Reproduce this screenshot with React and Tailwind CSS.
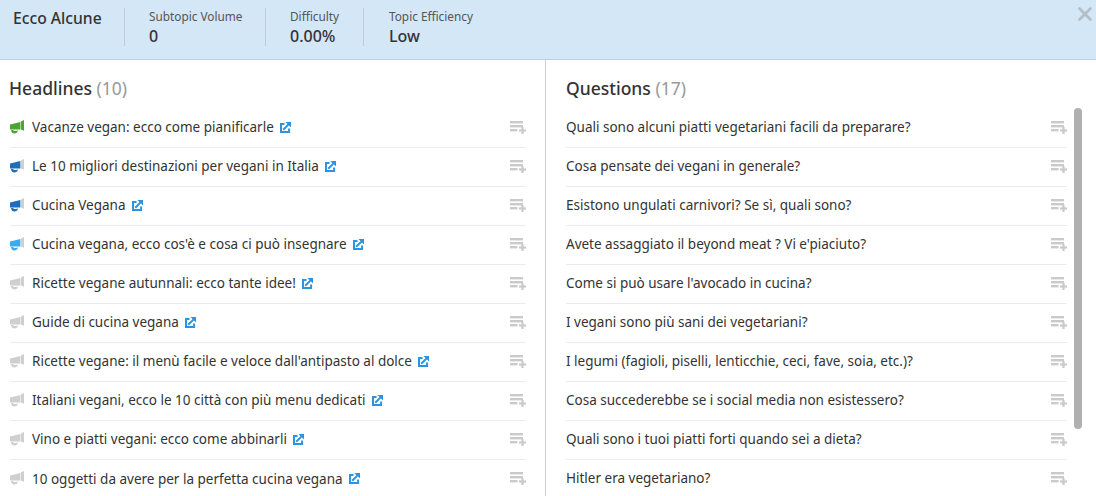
import { X } from 'lucide-react';

const headlines = [
  { text: 'Vacanze vegan: ecco come pianificarle', level: 4 },
  { text: 'Le 10 migliori destinazioni per vegani in Italia', level: 3 },
  { text: 'Cucina Vegana', level: 3 },
  { text: "Cucina vegana, ecco cos'è e cosa ci può insegnare", level: 2 },
  { text: 'Ricette vegane autunnali: ecco tante idee!', level: 1 },
  { text: 'Guide di cucina vegana', level: 1 },
  { text: "Ricette vegane: il menù facile e veloce dall'antipasto al dolce", level: 1 },
  { text: 'Italiani vegani, ecco le 10 città con più menu dedicati', level: 1 },
  { text: 'Vino e piatti vegani: ecco come abbinarli', level: 1 },
  { text: '10 oggetti da avere per la perfetta cucina vegana', level: 1 },
];

const questions = [
  'Quali sono alcuni piatti vegetariani facili da preparare?',
  'Cosa pensate dei vegani in generale?',
  'Esistono ungulati carnivori? Se sì, quali sono?',
  "Avete assaggiato il beyond meat ? Vi e'piaciuto?",
  "Come si può usare l'avocado in cucina?",
  'I vegani sono più sani dei vegetariani?',
  'I legumi (fagioli, piselli, lenticchie, ceci, fave, soia, etc.)?',
  'Cosa succederebbe se i social media non esistessero?',
  'Quali sono i tuoi piatti forti quando sei a dieta?',
  'Hitler era vegetariano?',
];

const bodyColors = { 1: '#cfcfcf', 2: '#3fa9ee', 3: '#1c6fb8', 4: '#4aa532' };
const hornColors = { 1: '#cfcfcf', 2: '#cfcfcf', 3: '#cfcfcf', 4: '#4aa532' };

function Megaphone({ level }) {
  return (
    <svg width="14" height="14" viewBox="0 0 14 14" className="shrink-0 mb-[2px]">
      <path d="M0 4.5L10.4 2V9.4H0Z" fill={bodyColors[level]} />
      <path d="M10.9 1.6L14 0V10.8L10.9 9.4Z" fill={hornColors[level]} />
      <path d="M1 10H3.2C3.5 11.2 5.2 11.6 7.6 10.2V12C5 14.4 1.4 14 1 10Z" fill={bodyColors[level]} />
    </svg>
  );
}

function ExternalIcon() {
  return (
    <svg width="11" height="11" viewBox="0 0 11 11" className="ml-[6px] shrink-0 mb-[1px]" fill="none" stroke="#2b94e1">
      <path d="M4.5 1.9H1V10H9.1V6.5" strokeWidth="2" />
      <path d="M3.2 7.8L8.6 2.4" strokeWidth="2" />
      <path d="M5.4 0H11V5.6Z" fill="#2b94e1" stroke="none" />
    </svg>
  );
}

function AddIcon() {
  return (
    <svg width="16" height="13" viewBox="0 0 16 13" className="block mb-[1px]" fill="#cacaca">
      <rect x="0" y="0" width="13" height="2.4" />
      <rect x="0" y="4" width="13" height="2.4" />
      <rect x="0" y="8" width="7.5" height="2.4" />
      <rect x="9" y="8.4" width="7" height="2.2" />
      <rect x="11.4" y="6" width="2.2" height="7" />
    </svg>
  );
}

function Stat({ label, value }) {
  return (
    <div className="flex flex-col">
      <span className="text-[11.8px] leading-[16px] text-[#555]">{label}</span>
      <span className="text-[16px] leading-[20px] mt-[2px] font-medium text-[#333]">{value}</span>
    </div>
  );
}

function Row({ children }) {
  return (
    <div className="h-[39px] pb-[1px] flex items-center border-b border-[#e9edf2] last:border-b-0 text-[13.5px] text-[#333]">
      {children}
    </div>
  );
}

export default function App() {
  return (
    <div className="w-[1096px] h-[496px] overflow-hidden bg-white flex flex-col font-['Noto_Sans','Open_Sans',sans-serif]">
      {/* Header */}
      <div className="relative h-[60px] shrink-0 bg-[#d3e7f7] border-b border-[#bfcfdd] flex pt-[8px]">
        <div className="w-[125px] pl-[13px] text-[15.7px] leading-[20px] font-medium text-[#333] border-r border-[#bfcdd9] h-[38px]">
          Ecco Alcune
        </div>
        <div className="w-[141px] pl-[24px] border-r border-[#bfcdd9] h-[38px]">
          <Stat label="Subtopic Volume" value="0" />
        </div>
        <div className="w-[98px] pl-[24px] border-r border-[#bfcdd9] h-[38px]">
          <Stat label="Difficulty" value="0.00%" />
        </div>
        <div className="pl-[25px]">
          <Stat label="Topic Efficiency" value="Low" />
        </div>
        <X size={22} strokeWidth={3} className="absolute right-0 top-[3px] text-[#b5bec5]" />
      </div>

      {/* Lists */}
      <div className="flex flex-1 min-h-0">
        <div className="w-[546px] border-r border-[#cfcfcf] pl-[10px] pr-[19px]">
          <h2 className="-ml-[1px] text-[17.5px] leading-[24px] font-medium text-[#333] mt-[16px] mb-[9px]">
            Headlines <span className="font-normal text-[#999]">(10)</span>
          </h2>
          {headlines.map((h) => (
            <Row key={h.text}>
              <Megaphone level={h.level} />
              <span className="ml-[8px]">{h.text}</span>
              <ExternalIcon />
              <span className="ml-auto"><AddIcon /></span>
            </Row>
          ))}
        </div>
        <div className="relative flex-1 pl-[20px] pr-[29px]">
          <h2 className="text-[17.5px] leading-[24px] font-medium text-[#333] mt-[16px] mb-[9px]">
            Questions <span className="font-normal text-[#999]">(17)</span>
          </h2>
          {questions.map((q) => (
            <Row key={q}>
              <span>{q}</span>
              <span className="ml-auto"><AddIcon /></span>
            </Row>
          ))}
          <div className="absolute right-[14px] top-[48px] w-[8px] h-[321px] rounded-full bg-[#b0b0b0]" />
        </div>
      </div>
    </div>
  );
}
